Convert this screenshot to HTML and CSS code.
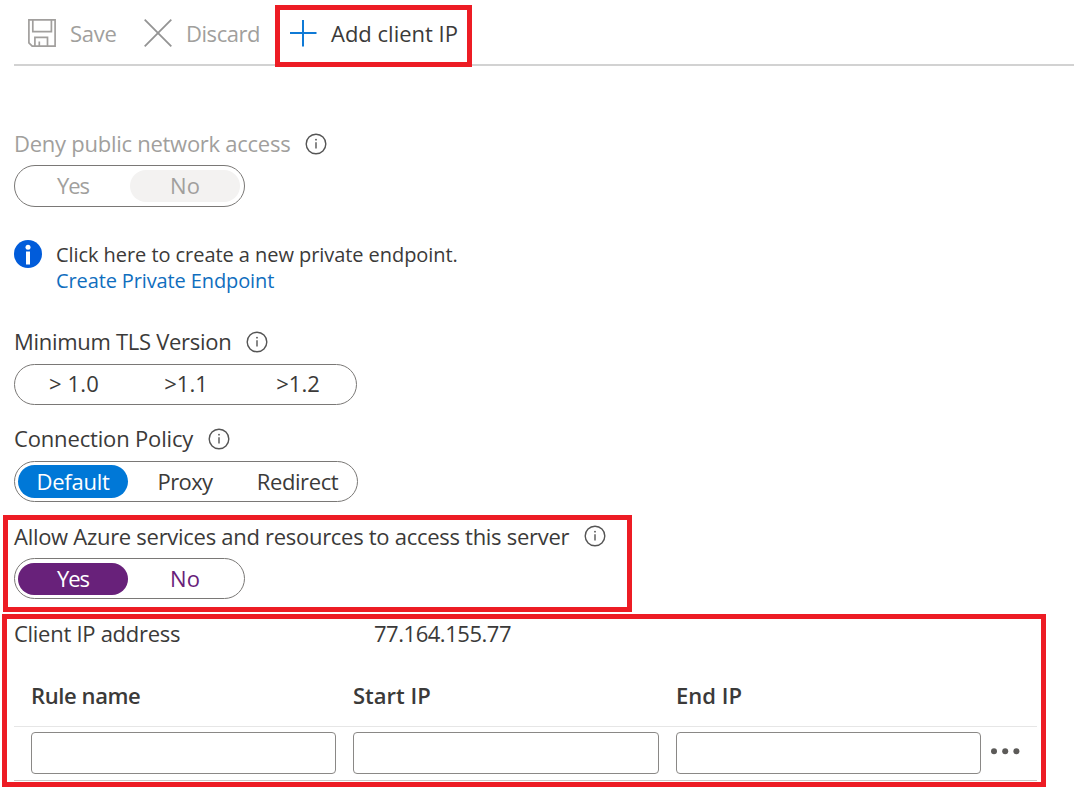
FILE: index.html
```html
<!DOCTYPE html>
<html lang="en">
<head>
<meta charset="utf-8">
<title>Firewall settings</title>
<link rel="stylesheet" href="styles.css">
</head>
<body>
<svg class="defs" width="0" height="0" aria-hidden="true">
  <symbol id="hint" viewBox="0 0 22 22">
    <circle cx="11" cy="11" r="9.8" fill="none" stroke="#555" stroke-width="1.4"/>
    <path d="M11 9.2v6.3" stroke="#555" stroke-width="1.4"/>
    <circle cx="11" cy="6.7" r="0.9" fill="#555"/>
  </symbol>
</svg>
<header class="toolbar">
  <div class="command command-save disabled">
    <svg width="28" height="28" viewBox="0 0 28 28" fill="none" stroke="#a19f9d" stroke-width="1.7"><path d="M.9.9h26.2v26.2H4.2L.9 23.8zM4.8 1v11.6h18.6V1M6.9 27V18.3h12.6V27M11.3 27v-4.600"/></svg>
    <span>Save</span>
  </div>
  <div class="command command-discard disabled">
    <svg width="28" height="28" viewBox="0 0 28 28" fill="none" stroke="#949494" stroke-width="1.8"><path d="M.7.7l26.600 26.600M27.300.7L.7 27.300"/></svg>
    <span>Discard</span>
  </div>
  <div class="command command-add">
    <svg width="27" height="27" viewBox="0 0 27 27" fill="none" stroke="#0f7ad6" stroke-width="2"><path d="M13 0v26.500M0 13h26.500"/></svg>
    <span>Add client IP</span>
  </div>
</header>
<main class="settings">
  <section class="field">
    <div class="label disabled"><span class="t-deny">Deny public network access</span><svg class="hint"><use href="#hint"/></svg></div>
    <div class="toggle toggle-tall disabled"><span class="option t-yes">Yes</span><span class="option option-off">No</span></div>
  </section>
  <section class="notice">
    <svg width="28" height="28" viewBox="0 0 28 28"><circle cx="14" cy="14" r="14" fill="#015cda"/><circle cx="14" cy="7.300" r="2.500" fill="#fff"/><path d="M12 11.500h4v13h-4z" fill="#fff"/></svg>
    <div class="notice-text">
      <div><span class="t-click">Click here to create a new private endpoint.</span></div>
      <div><a class="link t-link">Create Private Endpoint</a></div>
    </div>
  </section>
  <section class="field">
    <div class="label"><span class="t-tls">Minimum TLS Version</span><svg class="hint"><use href="#hint"/></svg></div>
    <div class="toggle toggle-three toggle-tls"><span class="option t-tls10">&gt; 1.0</span><span class="option">&gt;1.1</span><span class="option">&gt;1.2</span></div>
  </section>
  <section class="field">
    <div class="label"><span class="t-policy">Connection Policy</span><svg class="hint"><use href="#hint"/></svg></div>
    <div class="toggle toggle-three"><span class="option option-blue t-default">Default</span><span class="option t-proxy">Proxy</span><span class="option t-redirect">Redirect</span></div>
  </section>
  <section class="field field-azure">
    <div class="label"><span class="t-azure">Allow Azure services and resources to access this server</span><svg class="hint"><use href="#hint"/></svg></div>
    <div class="toggle toggle-purple"><span class="option option-purple t-yes">Yes</span><span class="option">No</span></div>
  </section>
  <section class="client"><span class="client-label">Client IP address</span><span class="client-value">77.164.155.77</span></section>
  <section class="rules">
    <div class="rules-head"><span class="t-rule">Rule name</span><span class="t-start">Start IP</span><span class="t-end">End IP</span></div>
    <div class="rules-row">
      <input type="text" aria-label="Rule name"><input type="text" aria-label="Start IP"><input type="text" aria-label="End IP">
      <svg class="more" width="30" height="8" viewBox="0 0 30 8" fill="#5c5a58"><circle cx="3" cy="4.300" r="3"/><circle cx="14.200" cy="4.300" r="3"/><circle cx="25.400" cy="4.300" r="3"/></svg>
    </div>
  </section>
</main>
<div class="mark mark-add"></div>
<div class="mark mark-azure"></div>
<div class="mark mark-rules"></div>
</body>
</html>
```
FILE: styles.css
```css
* { box-sizing: border-box; }
body {
  margin: 0;
  height: 794px;
  overflow: hidden;
  position: relative;
  background: #fff;
  color: #3b3a39;
  font-family: "Open Sans", "Noto Sans", sans-serif;
  font-size: 22px;
}
svg { display: block; flex: none; }
span, a { white-space: nowrap; }
.defs { position: absolute; }

.toolbar {
  display: flex;
  height: 66px;
  margin-left: 14px;
  padding-left: 14px;
  border-bottom: 2px solid #d2d2d2;
}
.command { display: flex; align-items: center; gap: 14px; height: 66px; }
.command-save { width: 116px; letter-spacing: -0.3px; }
.command-discard { width: 146px; letter-spacing: -0.45px; }
.disabled { color: #a19f9d; }

.settings { display: flex; flex-direction: column; padding: 63px 0 0 14px; }
.field { display: flex; flex-direction: column; gap: 7px; margin-bottom: 19px; }
.label { display: flex; align-items: center; height: 30px; gap: 15px; }
.label span { padding-bottom: 2px; }
.field-azure .label span { padding-bottom: 0; }
.hint { width: 22px; height: 22px; }
.toggle {
  display: grid;
  grid-template-columns: repeat(2, 110px);
  gap: 2px;
  width: 231px;
  height: 41px;
  padding: 3px;
  border: 1px solid #7a7876;
  border-radius: 21px;
}
.toggle-tall { height: 42px; margin-top: -1px; padding-top: 4px; padding-bottom: 4px; }
.toggle-three { grid-template-columns: repeat(3, 110px); width: 344px; }
.toggle-tls { width: 343px; padding-left: 4px; }
.option {
  display: flex;
  align-items: center;
  justify-content: center;
  height: 33px;
  padding-bottom: 2px;
  border-radius: 17px;
}
.toggle-tall .option { height: 32px; }
.toggle-tls .option { padding-bottom: 4px; }
.option-off { background: #f3f2f1; }
.option-blue { background: #0078d7; color: #fff; }
.toggle-purple { padding-top: 4px; }
.toggle-purple .option { height: 32px; color: #68217a; }
.toggle-purple .option-purple { background: #68217a; color: #fff; }
.notice { display: flex; gap: 14px; height: 56px; margin: 14px 0 31px; }
.notice-text { padding-top: 2px; font-size: 20px; line-height: 26px; }
.link { color: #106ebe; }
.client { display: flex; height: 30px; line-height: 30px; }
.client-label { width: 360px; letter-spacing: -0.28px; }
.client-value { letter-spacing: -0.47px; }
.rules { width: 1023px; margin-top: 17px; }
.rules-head {
  display: grid;
  grid-template-columns: 322px 323px 1fr;
  height: 62px;
  padding-left: 17px;
  line-height: 60px;
  font-weight: 600;
  border-bottom: 1px solid #e6e6e6;
}
.rules-row {
  display: grid;
  grid-template-columns: 305px 306px 305px 30px;
  column-gap: 17px;
  height: 54px;
  padding: 5px 0 0 17px;
  border-bottom: 1px solid #c8c6c4;
}
.rules-row input { height: 42px; margin: 0; border: 1px solid #8a8886; border-radius: 4px; background: #fff; }
.more { margin: 15px 0 0 -7px; }

.t-deny { letter-spacing: -0.26px; }
.t-click { letter-spacing: -0.06px; }
.t-link { letter-spacing: -0.12px; }
.t-tls { letter-spacing: -0.29px; }
.t-policy { letter-spacing: -0.16px; }
.t-azure { letter-spacing: -0.285px; }
.t-yes { letter-spacing: -1px; }
.t-tls10 { letter-spacing: 0.2px; }
.t-default { letter-spacing: -0.25px; }
.t-proxy { letter-spacing: -0.6px; }
.t-redirect { padding-left: 1px; letter-spacing: -0.4px; }
.t-rule { letter-spacing: -0.4px; }

.mark { position: absolute; border: 5px solid #ed1c24; pointer-events: none; }
.mark-add { left: 275px; top: 5px; width: 197px; height: 62px; }
.mark-azure { left: 3px; top: 515px; width: 629px; height: 97px; }
.mark-rules { left: 2px; top: 614px; width: 1044px; height: 173px; }
```
